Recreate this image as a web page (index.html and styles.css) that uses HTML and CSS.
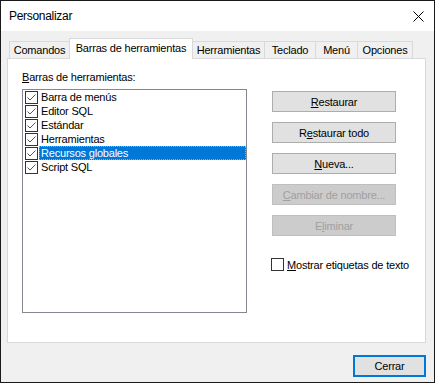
FILE: index.html
```html
<!DOCTYPE html>
<html lang="es">
<head>
<meta charset="utf-8">
<title>Personalizar</title>
<link rel="stylesheet" href="styles.css">
</head>
<body>
<div class="window">
  <div class="titlebar">
    <span class="title">Personalizar</span>
    <svg class="close" width="11" height="11" viewBox="0 0 11 11"><path d="M0.5 0.5 L10.5 10.5 M10.5 0.5 L0.5 10.5" stroke="#000" stroke-width="1" fill="none"/></svg>
  </div>
  <div class="client">
    <div class="tabs">
      <div class="tab t-com">Comandos</div>
      <div class="tab active t-bar">Barras de herramientas</div>
      <div class="tab t-her">Herramientas</div>
      <div class="tab t-tec">Teclado</div>
      <div class="tab t-men">Menú</div>
      <div class="tab t-opc">Opciones</div>
    </div>
    <div class="panel">
      <div class="left">
        <div class="label"><u>B</u>arras de herramientas:</div>
        <div class="listbox">
          <div class="item"><span class="cb"><svg width="11" height="11" viewBox="0 0 11 11"><path d="M1.5 5.5 L4 8 L9.5 2.5" fill="none" stroke="#555" stroke-width="1"/></svg></span><span class="text">Barra de menús</span></div>
          <div class="item"><span class="cb"><svg width="11" height="11" viewBox="0 0 11 11"><path d="M1.5 5.5 L4 8 L9.5 2.5" fill="none" stroke="#555" stroke-width="1"/></svg></span><span class="text">Editor SQL</span></div>
          <div class="item"><span class="cb"><svg width="11" height="11" viewBox="0 0 11 11"><path d="M1.5 5.5 L4 8 L9.5 2.5" fill="none" stroke="#555" stroke-width="1"/></svg></span><span class="text">Estándar</span></div>
          <div class="item"><span class="cb"><svg width="11" height="11" viewBox="0 0 11 11"><path d="M1.5 5.5 L4 8 L9.5 2.5" fill="none" stroke="#555" stroke-width="1"/></svg></span><span class="text">Herramientas</span></div>
          <div class="item sel"><span class="cb"><svg width="11" height="11" viewBox="0 0 11 11"><path d="M1.5 5.5 L4 8 L9.5 2.5" fill="none" stroke="#555" stroke-width="1"/></svg></span><span class="text">Recursos globales</span></div>
          <div class="item"><span class="cb"><svg width="11" height="11" viewBox="0 0 11 11"><path d="M1.5 5.5 L4 8 L9.5 2.5" fill="none" stroke="#555" stroke-width="1"/></svg></span><span class="text">Script SQL</span></div>
        </div>
      </div>
      <div class="right">
        <button class="btn"><u>R</u>estaurar</button>
        <button class="btn">R<u>e</u>staurar todo</button>
        <button class="btn"><u>N</u>ueva...</button>
        <button class="btn disabled"><u>C</u>ambiar de nombre...</button>
        <button class="btn disabled">E<u>l</u>iminar</button>
        <div class="chk"><span class="cb"></span><span><u>M</u>ostrar etiquetas de texto</span></div>
      </div>
    </div>
    <div class="footer">
      <button class="btn default">Cerrar</button>
    </div>
  </div>
</div>
</body>
</html>
```
FILE: styles.css
```css
* { box-sizing: border-box; }
html, body { margin: 0; padding: 0; }
body {
  width: 435px;
  height: 383px;
  font-family: "Liberation Sans", Arial, sans-serif;
  font-size: 11px;
  letter-spacing: -0.2px;
  color: #000;
  background: #fff;
}
.window {
  width: 435px;
  height: 383px;
  border: 1px solid #1a1a1a;
  display: flex;
  flex-direction: column;
  background: #f0f0f0;
}
.titlebar {
  height: 30px;
  flex: none;
  background: #fff;
  display: flex;
  align-items: center;
  justify-content: space-between;
  padding: 0 10px 0 8px;
}
.title {
  font-size: 12px;
  letter-spacing: -0.3px;
}
.close { display: block; }
.client {
  flex: 1;
  padding: 7px 8px 4px 6px;
  display: flex;
  flex-direction: column;
}
.tabs {
  height: 20px;
  display: flex;
  align-items: flex-end;
  margin-left: 2px;
}
.tab {
  height: 17px;
  border: 1px solid #d9d9d9;
  border-bottom: none;
  background: #f0f0f0;
  display: flex;
  align-items: center;
  justify-content: center;
  margin-left: -1px;
  white-space: nowrap;
}
.tab.t-com { margin-left: 0; width: 61px; }
.tab.t-bar { width: 124px; }
.tab.t-her { width: 73px; }
.tab.t-tec { width: 52px; }
.tab.t-men { width: 43px; }
.tab.t-opc { width: 56px; }
.tab.active {
  height: 21px;
  background: #fff;
  margin-bottom: -1px;
  padding-bottom: 2px;
  position: relative;
  z-index: 1;
}
.panel {
  height: 285px;
  flex: none;
  background: #fff;
  border: 1px solid #d9d9d9;
  display: flex;
  padding: 12px 0 0 14px;
}
.left { width: 225px; flex: none; }
.label { height: 13px; line-height: 13px; }
.listbox {
  margin-top: 5px;
  height: 224px;
  border: 1px solid #828790;
  background: #fff;
  padding-left: 2px;
}
.item {
  height: 14px;
  display: flex;
  align-items: center;
}
.cb {
  width: 13px;
  height: 13px;
  flex: none;
  border: 1px solid #333;
  background: #fff;
  display: block;
}
.cb svg { display: block; }
.item .text {
  flex: 1;
  margin-left: 1px;
  padding-left: 2px;
  height: 14px;
  line-height: 14px;
  white-space: nowrap;
}
.item.sel .text {
  background: #0078d7;
  color: #fff;
  outline: 1px dotted #f6a000;
  outline-offset: -1px;
}
.right {
  margin-left: 25px;
  padding-top: 20px;
  display: flex;
  flex-direction: column;
  align-items: flex-start;
}
.btn {
  width: 124px;
  height: 21px;
  margin: 0 0 10px 0;
  padding: 0;
  border: 1px solid #adadad;
  background: #e1e1e1;
  font: inherit;
  letter-spacing: inherit;
  color: #000;
}
.btn.disabled {
  background: #cccccc;
  border-color: #bfbfbf;
  color: #a0a0a0;
}
.chk {
  display: flex;
  align-items: center;
  margin-top: 12px;
  margin-left: -1px;
  white-space: nowrap;
}
.chk .cb { margin-right: 3px; }
.footer {
  margin-top: 12px;
  display: flex;
  justify-content: flex-end;
}
.btn.default {
  width: 73px;
  height: 22px;
  margin: 0;
  border: 2px solid #0078d7;
}
```
